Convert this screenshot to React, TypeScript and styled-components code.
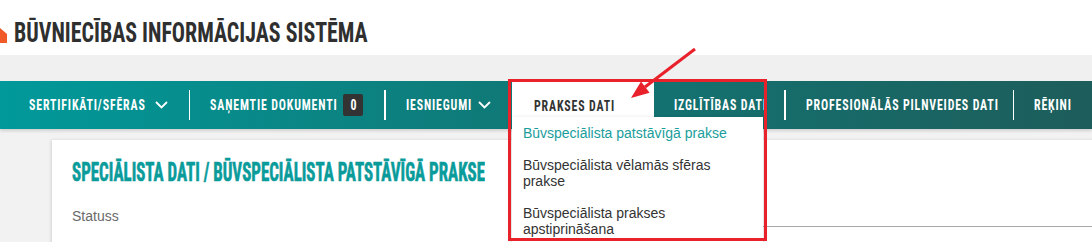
import styled, { createGlobalStyle } from 'styled-components'

const Global = createGlobalStyle`
  html, body { margin: 0; padding: 0; }
  body {
    background: #f2f2f2;
    overflow: hidden;
    font-family: "Liberation Sans", Arial, sans-serif;
  }
`

const Page = styled.div`
  position: relative;
  width: 1092px;
  height: 242px;
  overflow: hidden;
`

// condensed caps text; the wrapper keeps the width that the squeezed text takes on screen
const Squeeze = styled.span<{ $w: number; $k: number }>`
  display: inline-block;
  width: ${p => p.$w}px;
  white-space: nowrap;
  & > span {
    display: inline-block;
    transform: scaleX(${p => p.$k});
    transform-origin: left center;
  }
`

const Header = styled.header`
  display: flex;
  align-items: flex-start;
  gap: 7px;
  height: 55px;
  padding-top: 18px;
  box-sizing: border-box;
  background: #fff;
`

const LogoMark = styled.svg`
  margin-top: 10px;
  flex: none;
`

const Title = styled.h1`
  margin: 0;
  font-family: "Roboto Condensed", "Open Sans Condensed", sans-serif;
  font-weight: 700;
  font-size: 28px;
  line-height: 30px;
  color: #2f2f2f;
`

const Band = styled.div`
  height: 26px;
  background: #f0f0f0;
`

const Nav = styled.nav`
  display: flex;
  align-items: stretch;
  height: 48px;
  padding-left: 9px;
  background: linear-gradient(to right, #01999a 0%, #0f7a78 45%, #1d5d5b 100%);
  box-shadow: 0 2px 3px rgba(0, 0, 0, 0.14);
  position: relative;
  z-index: 1;
`

const NavItem = styled.div<{ $active?: boolean; $w?: number }>`
  position: relative;
  display: flex;
  align-items: center;
  gap: 8px;
  padding: 0 21px 0 ${p => (p.$active ? 22 : 20)}px;
  ${p => p.$w && `width: ${p.$w}px; box-sizing: border-box;`}
  background: ${p => (p.$active ? '#fff' : 'transparent')};
  color: ${p => (p.$active ? '#333' : '#fff')};
  font-family: "Roboto Condensed", "Open Sans Condensed", sans-serif;
  font-weight: 700;
  font-size: 14px;
  letter-spacing: 1px;
  padding-top: ${p => (p.$active ? 2 : 0)}px;
`

const Separator = styled.div`
  align-self: center;
  width: 1.5px;
  height: 30px;
  background: #fff;
`

const Badge = styled.span`
  display: flex;
  align-items: center;
  justify-content: center;
  width: 20px;
  height: 22px;
  border-radius: 2px;
  background: #333;
  color: #fff;
  letter-spacing: 0;
  & > span {
    display: inline-block;
    transform: scaleX(0.85);
  }
`

const Dropdown = styled.ul`
  position: absolute;
  top: 36px;
  left: 0;
  width: 251px;
  margin: 0;
  padding: 0;
  list-style: none;
  background: #fff;
  box-shadow: 0 2px 5px rgba(0, 0, 0, 0.22);
  font-family: "Liberation Sans", Arial, sans-serif;
  font-weight: 400;
  font-size: 14px;
  line-height: 16px;
  letter-spacing: 0;
`

const DropItem = styled.li<{ $current?: boolean }>`
  padding: 8px 11px;
  color: ${p => (p.$current ? '#1a9d9d' : '#333')};
`

const Main = styled.main`
  padding: 11px 0 0 52px;
`

const Card = styled.section`
  margin-right: -20px;
  height: 120px;
  padding: 18px 20px 0;
  background: #fff;
  box-shadow: -1px 0 3px rgba(0, 0, 0, 0.13);
`

const Heading = styled.h2`
  margin: 0;
  font-family: "Roboto Condensed", "Open Sans Condensed", sans-serif;
  font-weight: 700;
  font-size: 25px;
  line-height: 30px;
  color: #0a9b9b;
  -webkit-text-stroke: 0.6px #0a9b9b;
`

const StatusRow = styled.div`
  display: grid;
  grid-template-columns: 488px 1fr;
  margin-top: 18px;
`

const Label = styled.span`
  font-size: 14px;
  line-height: 20px;
  color: #6a6a6a;
`

const Field = styled.div`
  height: 20px;
  border-bottom: 1px solid #a8a8a8;
`

const Highlight = styled.div`
  position: absolute;
  left: 508px;
  top: 79px;
  width: 259px;
  height: 162px;
  box-sizing: border-box;
  border: 3px solid #e8212b;
  z-index: 3;
  pointer-events: none;
`

const Pointer = styled.svg`
  position: absolute;
  left: 0;
  top: 0;
  z-index: 3;
  pointer-events: none;
`

const Chevron = () => (
  <svg width="13" height="8" viewBox="0 0 13 8">
    <polyline points="1,1 6.5,6.5 12,1" fill="none" stroke="#fff" strokeWidth="1.8" />
  </svg>
)

const NAV_K = 0.847

export default function App() {
  return (
    <Page>
      <Global />
      <Header>
        <LogoMark width="7" height="15" viewBox="0 0 7 15">
          <polygon points="0,0 7,6 7,15 0,15" fill="#f15a29" />
        </LogoMark>
        <Title>
          <Squeeze $w={353} $k={0.782}>
            <span>BŪVNIECĪBAS INFORMĀCIJAS SISTĒMA</span>
          </Squeeze>
        </Title>
      </Header>
      <Band />
      <Nav>
        <NavItem>
          <Squeeze $w={118} $k={NAV_K}><span>SERTIFIKĀTI/SFĒRAS</span></Squeeze>
          <Chevron />
        </NavItem>
        <Separator />
        <NavItem>
          <Squeeze $w={125} $k={NAV_K}><span>SAŅEMTIE DOKUMENTI</span></Squeeze>
          <Badge><span>0</span></Badge>
        </NavItem>
        <Separator />
        <NavItem>
          <Squeeze $w={64} $k={NAV_K}><span>IESNIEGUMI</span></Squeeze>
          <Chevron />
        </NavItem>
        <NavItem $active $w={145}>
          <Squeeze $w={78} $k={NAV_K}><span>PRAKSES DATI</span></Squeeze>
          <Dropdown>
            <DropItem $current>Būvspeciālista patstāvīgā prakse</DropItem>
            <DropItem>Būvspeciālista vēlamās sfēras prakse</DropItem>
            <DropItem>Būvspeciālista prakses apstiprināšana</DropItem>
          </Dropdown>
        </NavItem>
        <NavItem>
          <Squeeze $w={89} $k={NAV_K}><span>IZGLĪTĪBAS DATI</span></Squeeze>
        </NavItem>
        <Separator />
        <NavItem>
          <Squeeze $w={186} $k={NAV_K}><span>PROFESIONĀLĀS PILNVEIDES DATI</span></Squeeze>
        </NavItem>
        <Separator />
        <NavItem>
          <Squeeze $w={37} $k={NAV_K}><span>RĒĶINI</span></Squeeze>
        </NavItem>
      </Nav>
      <Main>
        <Card>
          <Heading>
            <Squeeze $w={413} $k={0.677}>
              <span>SPECIĀLISTA DATI / BŪVSPECIĀLISTA PATSTĀVĪGĀ PRAKSE</span>
            </Squeeze>
          </Heading>
          <StatusRow>
            <Label>Statuss</Label>
            <Field />
          </StatusRow>
        </Card>
      </Main>
      <Highlight />
      <Pointer width="1092" height="242" viewBox="0 0 1092 242">
        <line x1="695" y1="49" x2="645" y2="87" stroke="#e8212b" strokeWidth="3" />
        <polygon points="631,98 649.6,92.7 641,81.5" fill="#e8212b" />
      </Pointer>
    </Page>
  )
}
